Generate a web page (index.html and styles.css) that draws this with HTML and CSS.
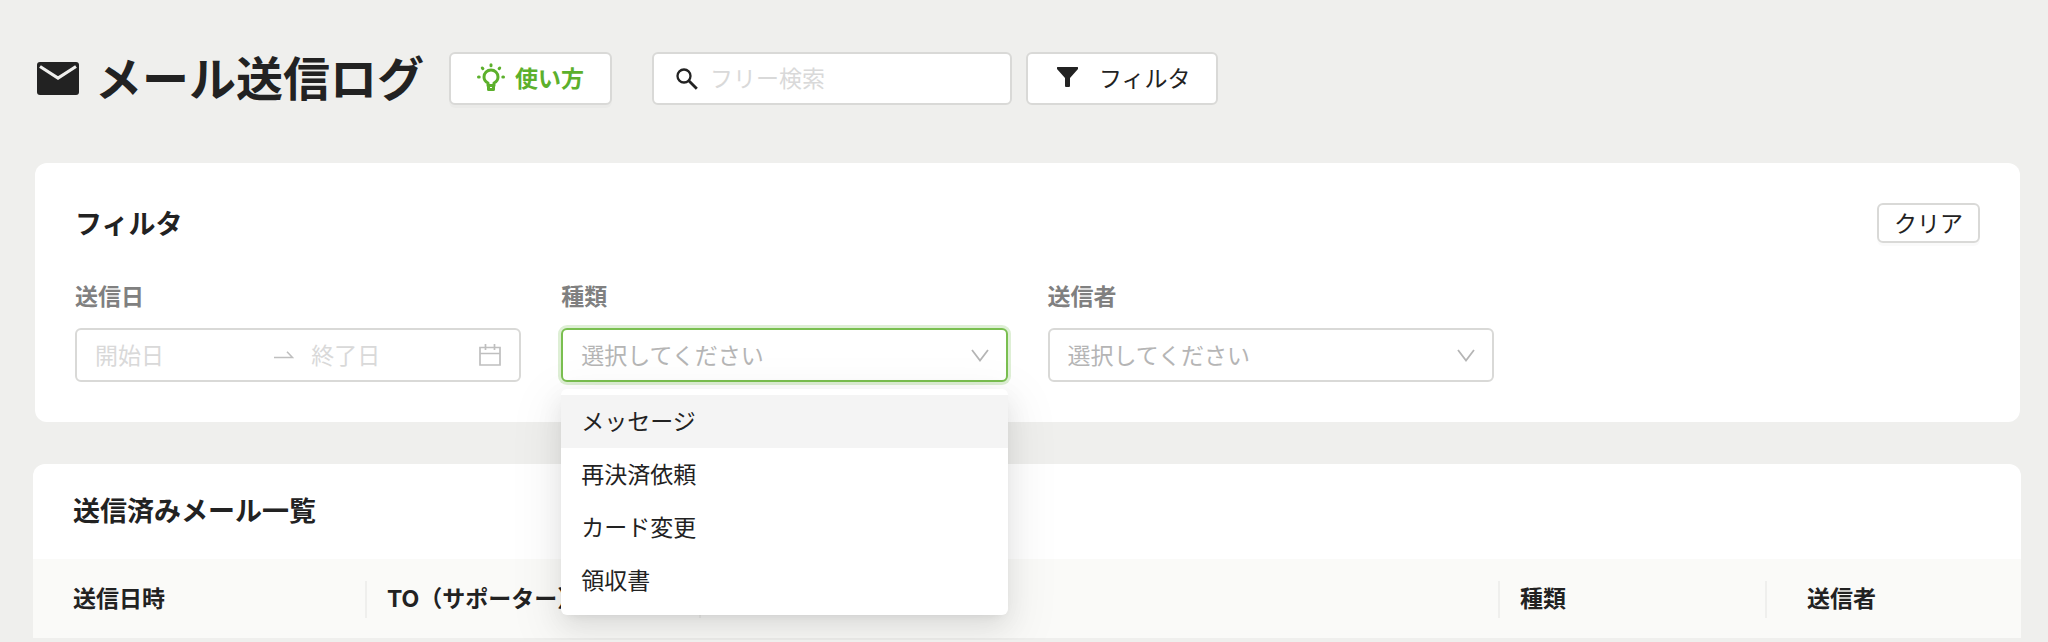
FILE: index.html
```html
<!DOCTYPE html>
<html lang="ja">
<head>
    <meta charset="UTF-8">
    <meta name="viewport" content="width=device-width, initial-scale=1.0">
    <title>メール送信ログ</title>
    <link rel="stylesheet" href="styles.css">
</head>
<body>
    <header class="page-header">
        <svg class="mail-icon" viewBox="0 0 42 33" aria-hidden="true">
            <rect width="42" height="33" rx="3" fill="#222"/>
            <path d="M3 4.500l18 11.500 18-11.500" fill="none" stroke="#efefed" stroke-width="3.200"/>
        </svg>
        <h1 class="page-title">メール送信ログ</h1>
        <button type="button" class="btn btn-help">
            <svg class="bulb-icon" viewBox="0 0 28 28" aria-hidden="true">
                <g fill="none" stroke="currentColor" stroke-width="3" stroke-linecap="round" stroke-linejoin="round">
                    <path d="M11 22.500v-2.500C8.500 18.800 7 16.700 7 14a7 7 0 0 1 14 0c0 2.700-1.500 4.800-4 6v2.500z"/>
                    <path d="M11.500 22.500v4h5v-4"/>
                    <path d="M14 1.700v1M5.300 5l.6.700M22.700 5l-.6.700M1.500 14h.7M25.800 14h.7"/>
                </g>
            </svg>
            使い方
        </button>
        <div class="search-box">
            <svg class="search-icon" viewBox="0 0 22 22" aria-hidden="true">
                <circle cx="8" cy="8" r="6.500" fill="none" stroke="#222" stroke-width="2.300"/>
                <path d="M12.800 12.800l8 8" stroke="#222" stroke-width="2.800"/>
            </svg>
            <input type="text" class="search-input" placeholder="フリー検索" aria-label="フリー検索">
        </div>
        <button type="button" class="btn btn-filter">
            <svg class="funnel-icon" viewBox="0 0 21 20" aria-hidden="true">
                <path d="M.5 0h20q.5 0 .5.500v1.500L13 11v8q0 1-1 1H9q-1 0-1-1v-8L0 2V.5Q0 0 .5 0z" fill="#222"/>
            </svg>
            フィルタ
        </button>
    </header>

    <section class="card filter-card">
        <div class="card-head">
            <h2 class="card-title">フィルタ</h2>
            <button type="button" class="btn btn-clear">クリア</button>
        </div>
        <div class="filters">
            <div class="field">
                <label class="field-label" for="dateFrom">送信日</label>
                <div class="control date-range">
                    <input type="text" id="dateFrom" class="date-input" placeholder="開始日">
                    <svg class="arrow-icon" viewBox="0 0 20 8" aria-hidden="true">
                        <path d="M0 6.500h18.500L13 .8" fill="none" stroke="#bfbfbf" stroke-width="1.600"/>
                    </svg>
                    <input type="text" id="dateTo" class="date-input" placeholder="終了日" aria-label="終了日">
                    <svg class="calendar-icon" viewBox="0 0 22 22" aria-hidden="true">
                        <path d="M1 3.500h20V21H1zM1 9.500h20M6.500 0v6M15.500 0v6" fill="none" stroke="#bfbfbf" stroke-width="1.700"/>
                    </svg>
                </div>
            </div>
            <div class="field">
                <label class="field-label" for="type">種類</label>
                <div class="select-wrap">
                    <select id="type" class="control select focused">
                        <option value="">選択してください</option>
                    </select>
                    <svg class="chevron-icon" viewBox="0 0 18 13" aria-hidden="true">
                        <path d="M1 1l8 10.500L17 1" fill="none" stroke="#b5b5b5" stroke-width="1.800"/>
                    </svg>
                    <ul class="dropdown" role="listbox" aria-label="種類">
                        <li class="dropdown-item active" role="option" aria-selected="false">メッセージ</li>
                        <li class="dropdown-item" role="option" aria-selected="false">再決済依頼</li>
                        <li class="dropdown-item" role="option" aria-selected="false">カード変更</li>
                        <li class="dropdown-item" role="option" aria-selected="false">領収書</li>
                    </ul>
                </div>
            </div>
            <div class="field">
                <label class="field-label" for="sender">送信者</label>
                <div class="select-wrap">
                    <select id="sender" class="control select">
                        <option value="">選択してください</option>
                    </select>
                    <svg class="chevron-icon" viewBox="0 0 18 13" aria-hidden="true">
                        <path d="M1 1l8 10.500L17 1" fill="none" stroke="#b5b5b5" stroke-width="1.800"/>
                    </svg>
                </div>
            </div>
        </div>
    </section>

    <section class="card list-card">
        <h2 class="card-title list-title">送信済みメール一覧</h2>
        <table class="log-table">
            <colgroup>
                <col class="col-date">
                <col class="col-to">
                <col class="col-subject">
                <col class="col-type">
                <col class="col-sender">
            </colgroup>
            <thead>
                <tr>
                    <th><div class="th-inner">送信日時</div></th>
                    <th><div class="th-inner">TO（サポーター）</div></th>
                    <th><div class="th-inner"></div></th>
                    <th><div class="th-inner">種類</div></th>
                    <th><div class="th-inner">送信者</div></th>
                </tr>
            </thead>
        </table>
    </section>
</body>
</html>
```
FILE: styles.css
```css
* {
    box-sizing: border-box;
}
body {
    margin: 0;
    padding: 52px 28px 0 35px;
    background: #efefed;
    color: #222;
    font-family: "Noto Sans CJK JP", sans-serif;
    font-size: 23px;
    line-height: 34px;
}
h1, h2, ul {
    margin: 0;
    padding: 0;
}
input, select, button {
    font: inherit;
    color: inherit;
}
.page-header {
    display: flex;
    align-items: center;
    height: 53px;
    margin-bottom: 58px;
    padding-left: 2px;
}
.mail-icon {
    width: 42px;
    height: 33px;
}
.page-title {
    margin: 0 25px 0 16px;
    padding-bottom: 6px;
    font-size: 47px;
    line-height: 52px;
}
.btn {
    display: flex;
    align-items: center;
    justify-content: center;
    height: 53px;
    padding: 0 28px 3px;
    background: #fff;
    border: 2px solid #d9d9d7;
    border-radius: 6px;
    box-shadow: 0 3px 0 rgba(0, 0, 0, 0.02);
    cursor: pointer;
}
.btn-help {
    gap: 10px;
    margin-right: 40px;
    padding: 0 26px 3px;
    color: #5cb02c;
    font-weight: bold;
}
.bulb-icon {
    width: 28px;
    height: 28px;
}
.search-box {
    display: flex;
    align-items: center;
    gap: 12px;
    width: 360px;
    height: 53px;
    margin-right: 14px;
    padding: 0 22px;
    background: #fff;
    border: 2px solid #d9d9d7;
    border-radius: 6px;
}
.search-icon {
    flex: none;
    width: 22px;
    height: 22px;
}
.search-input {
    flex: 1;
    min-width: 0;
    padding: 0 0 3px;
    border: none;
    outline: none;
    background: none;
}
::placeholder {
    color: #d9d9d9;
    opacity: 1;
}
.btn-filter {
    gap: 21px;
    padding: 0 25px 3px 29px;
    box-shadow: none;
}
.funnel-icon {
    width: 21px;
    height: 20px;
}
.card {
    background: #fff;
    border-radius: 12px;
}
.filter-card {
    margin-bottom: 42px;
    padding: 40px;
}
.card-head {
    display: flex;
    align-items: center;
    justify-content: space-between;
    margin-bottom: 35px;
}
.card-title {
    font-size: 27px;
    line-height: 40px;
}
.btn-clear {
    height: 40px;
    padding: 0 15px 3px;
}
.filters {
    display: grid;
    grid-template-columns: repeat(4, 1fr);
    gap: 40px;
}
.field-label {
    display: block;
    margin-bottom: 16px;
    color: #808080;
    font-weight: bold;
}
.control {
    width: 100%;
    height: 54px;
    padding: 0 18px;
    background: #fff;
    border: 2px solid #d9d9d7;
    border-radius: 6px;
}
.date-range {
    display: flex;
    align-items: center;
}
.date-input {
    flex: 1;
    width: 0;
    padding: 0 0 3px;
    border: none;
    outline: none;
    background: none;
}
.arrow-icon {
    width: 20px;
    height: 8px;
    margin: 0 17px 0 11px;
}
.calendar-icon {
    width: 22px;
    height: 22px;
}
.select-wrap {
    position: relative;
}
.select {
    display: block;
    padding-bottom: 3px;
    appearance: none;
    color: #b5b5b5;
    outline: none;
}
.select.focused {
    border-color: #7abf50;
    box-shadow: 0 0 0 3px rgba(92, 176, 44, 0.2);
}
.chevron-icon {
    position: absolute;
    top: 21px;
    right: 19px;
    width: 18px;
    height: 13px;
    pointer-events: none;
}
.dropdown {
    position: absolute;
    top: 61px;
    left: 0;
    z-index: 10;
    width: 100%;
    padding: 6px 0 8px;
    background: #fff;
    border-radius: 6px;
    box-shadow: 0 5px 10px -7px rgba(0, 0, 0, 0.12), 0 10px 27px rgba(0, 0, 0, 0.08), 0 15px 47px 13px rgba(0, 0, 0, 0.05);
    list-style: none;
}
.dropdown-item {
    height: 53px;
    padding: 0 20px;
    line-height: 50px;
}
.dropdown-item.active {
    background: #f4f4f4;
}
.list-card {
    margin: 0 -1px 0 -2px;
}
.list-title {
    padding: 26px 40px 29px;
}
.log-table {
    width: 100%;
    border-collapse: collapse;
    table-layout: fixed;
    font-family: Inter, "Noto Sans CJK JP", sans-serif;
}
.col-date, .col-to {
    width: 334px;
}
.col-type {
    width: 267px;
}
.col-sender {
    width: 254px;
}
.log-table th {
    padding: 22px 0 20px;
    background: #fafaf8;
    border-bottom: 2px solid #efefed;
    text-align: left;
}
.th-inner {
    height: 37px;
    padding: 0 20px;
    border-right: 2px solid #efefed;
    line-height: 36px;
}
.log-table th:first-child .th-inner {
    padding-left: 40px;
}
.log-table th:last-child .th-inner {
    padding-left: 40px;
    border-right: none;
}
```
